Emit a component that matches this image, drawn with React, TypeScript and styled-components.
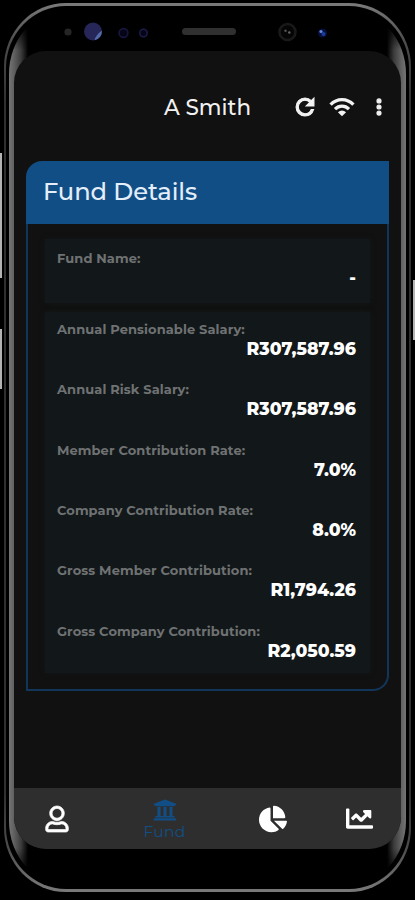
import React from "react";
import styled, { createGlobalStyle } from "styled-components";
import { FaRegUser, FaUniversity, FaChartPie, FaChartLine } from "react-icons/fa";
import { IoMdRefresh, IoMdMore } from "react-icons/io";

const GlobalStyle = createGlobalStyle`
  * { box-sizing: border-box; }
  body { margin: 0; background: #000; font-family: Montserrat, "Inter", sans-serif; }
`;

const Stage = styled.div`
  position: relative;
  width: 415px;
  height: 900px;
  padding: 3px 4px 0;
  background: #000;
  overflow: hidden;
`;

const SideKey = styled.i<{ $side: "left" | "right"; $top: number; $height: number }>`
  position: absolute;
  ${(p) => p.$side}: 0;
  top: ${(p) => p.$top}px;
  width: 2px;
  height: ${(p) => p.$height}px;
  background: #b4b4b4;
`;

const Shell = styled.div`
  width: 407px;
  height: 889px;
  padding: 3px 2px;
  border-radius: 62px / 64px;
  background: linear-gradient(#7a7a7a, #4c4c4c 40px, #303030 100px, #303030 790px, #4c4c4c 845px, #7a7a7a);
`;

const Rim = styled.div`
  height: 100%;
  padding: 4px 3px;
  border-radius: 60px / 62px;
  background: #000;
`;

const Bezel = styled.div`
  display: flex;
  flex-direction: column;
  height: 100%;
  padding: 0 5px;
  border-radius: 57px / 64px;
  background:
    linear-gradient(#000 0, #000 12px, transparent 40px, transparent 838px, #000 868px),
    linear-gradient(90deg, #747474 0, #606060 5px, #3c3c3c 12px, #000 19px, #000 378px, #3c3c3c 385px, #606060 392px, #747474 397px);
`;

const SensorBar = styled.div`
  display: grid;
  grid-template-columns: 108px 57px 1fr 91px;
  flex: 0 0 41px;
  align-items: center;
  margin: 0 46px 0 49px;
  padding-top: 2px;
  svg { display: block; }
`;

const Speaker = styled.div`
  width: 54px;
  height: 7px;
  margin-left: 11px;
  border-radius: 4px;
  background: #303030;
`;

const Screen = styled.main`
  display: flex;
  flex-direction: column;
  height: 798px;
  border-radius: 32px;
  background: #111;
  overflow: hidden;
`;

const AppBar = styled.header`
  display: flex;
  align-items: center;
  height: 110px;
  padding: 2px 15px 0 150px;
  color: #f2f2f2;
`;

const UserName = styled.h1`
  flex: 1;
  margin: 0;
  font-size: 21.5px;
  font-weight: 500;
  white-space: nowrap;
`;

const Actions = styled.div`
  display: grid;
  grid-template-columns: 24px 26px 24px;
  column-gap: 12px;
  place-items: center;
  margin-right: -5px;
  svg { display: block; }
  svg:not(:nth-child(2)) { stroke: currentColor; stroke-width: 22px; }
`;

const Card = styled.section`
  display: flex;
  flex-direction: column;
  height: 530px;
  margin: 0 12px;
`;

const CardTitle = styled.h2`
  display: flex;
  align-items: center;
  flex: 0 0 63px;
  margin: 0;
  padding: 0 17px 2px;
  border-radius: 16px 0 0 0;
  background: #114e85;
  color: #e4eefa;
  font-size: 24.2px;
  font-weight: 500;
  letter-spacing: -0.1px;
`;

const CardBody = styled.div`
  flex: 1;
  padding: 15px 17px 0;
  border: solid #12365a;
  border-width: 0 2px 2px;
  border-radius: 0 0 16px 0;
`;

const Group = styled.div<{ $single?: boolean }>`
  height: ${(p) => (p.$single ? 64 : 361)}px;
  margin-bottom: 9px;
  padding: ${(p) => (p.$single ? "11px" : "9px")} 14px 0 12px;
  background: #121719;
  box-shadow: 0 0 5px #121719;
`;

const Field = styled.div`
  height: 60.35px;
`;

const Label = styled.div`
  height: 18px;
  color: #6f7273;
  font-size: 13px;
  line-height: 17px;
  font-weight: 700;
  letter-spacing: 0.1px;
  white-space: nowrap;
`;

const Value = styled.div`
  color: #fff;
  font-size: 17.3px;
  line-height: 20px;
  font-weight: 800;
  text-align: right;
`;

const TabBar = styled.nav`
  display: grid;
  grid-template-columns: 86px 129px 88px 85px;
  height: 61px;
  margin-top: auto;
  background: #2e2e2e;
`;

const Tab = styled.div<{ $active?: boolean }>`
  display: flex;
  flex-direction: column;
  align-items: center;
  justify-content: ${(p) => (p.$active ? "flex-start" : "center")};
  padding-top: ${(p) => (p.$active ? 10 : 0)}px;
  color: ${(p) => (p.$active ? "#114e85" : "#fff")};
  font-size: 15.5px;
  line-height: 20px;
  letter-spacing: 0.3px;
  svg { display: block; flex: none; }
`;

const ProfileIcon = styled(FaRegUser)`
  stroke: currentColor;
  stroke-width: 14px;
  overflow: visible;
`;

const fields = [
  { label: "Annual Pensionable Salary:", value: "R307,587.96" },
  { label: "Annual Risk Salary:", value: "R307,587.96" },
  { label: "Member Contribution Rate:", value: "7.0%" },
  { label: "Company Contribution Rate:", value: "8.0%" },
  { label: "Gross Member Contribution:", value: "R1,794.26" },
  { label: "Gross Company Contribution:", value: "R2,050.59" },
];

const WifiIcon = () => (
  <svg width="26" height="20" viewBox="0 0 26 20" fill="none" stroke="currentColor" strokeWidth="3.3">
    <path d="M1.6 7.6C8 .9 18 .9 24.4 7.6" />
    <path d="M6 12.2C10 8.2 16 8.2 20 12.2" />
    <path d="M8.9 15.2Q13 12 17.1 15.2L13 19.2z" fill="currentColor" stroke="none" />
  </svg>
);

const LeftSensors = () => (
  <svg width="108" height="24" viewBox="0 0 108 24">
    <circle cx="5" cy="12" r="3.6" fill="#262626" />
    <circle cx="30" cy="11.5" r="9" fill="#262659" />
    <path d="M38.9 10.5a9 9 0 0 1-7.4 9.8q1-5 7.4-9.8z" fill="#536ba9" />
    <circle cx="60.5" cy="13" r="4.4" fill="#050515" stroke="#17163d" strokeWidth="1.6" />
    <circle cx="80.5" cy="13" r="3.7" fill="#050515" stroke="#1c1b49" strokeWidth="1.6" />
  </svg>
);

const RightSensors = () => (
  <svg width="91" height="24" viewBox="0 0 91 24">
    <circle cx="23.5" cy="12" r="8" fill="#050505" stroke="#191919" strokeWidth="2.6" />
    <circle cx="21.5" cy="10.8" r="1.2" fill="#555" />
    <circle cx="25.3" cy="12.5" r="1.2" fill="#666" />
    <circle cx="58.5" cy="13" r="4.5" fill="#07103d" />
    <circle cx="57" cy="11.5" r="1.6" fill="#6689df" />
    <circle cx="59.5" cy="14" r="2" fill="#1b3c9d" />
  </svg>
);

export default function App() {
  return (
    <>
      <GlobalStyle />
      <Stage>
        <SideKey $side="left" $top={153} $height={125} />
        <SideKey $side="left" $top={329} $height={60} />
        <SideKey $side="right" $top={280} $height={60} />
        <Shell>
          <Rim>
            <Bezel>
              <SensorBar>
                <LeftSensors />
                <Speaker />
                <span />
                <RightSensors />
              </SensorBar>
              <Screen>
                <AppBar>
                  <UserName>A Smith</UserName>
                  <Actions>
                    <IoMdRefresh size={26} />
                    <WifiIcon />
                    <IoMdMore size={26} />
                  </Actions>
                </AppBar>
                <Card>
                  <CardTitle>Fund Details</CardTitle>
                  <CardBody>
                    <Group $single>
                      <Label>Fund Name:</Label>
                      <Value>-</Value>
                    </Group>
                    <Group>
                      {fields.map((f) => (
                        <Field key={f.label}>
                          <Label>{f.label}</Label>
                          <Value>{f.value}</Value>
                        </Field>
                      ))}
                    </Group>
                  </CardBody>
                </Card>
                <TabBar>
                  <Tab><ProfileIcon size={26} /></Tab>
                  <Tab $active>
                    <FaUniversity size={24} />
                    Fund
                  </Tab>
                  <Tab><FaChartPie size={28} /></Tab>
                  <Tab><FaChartLine size={27} /></Tab>
                </TabBar>
              </Screen>
            </Bezel>
          </Rim>
        </Shell>
      </Stage>
    </>
  );
}
